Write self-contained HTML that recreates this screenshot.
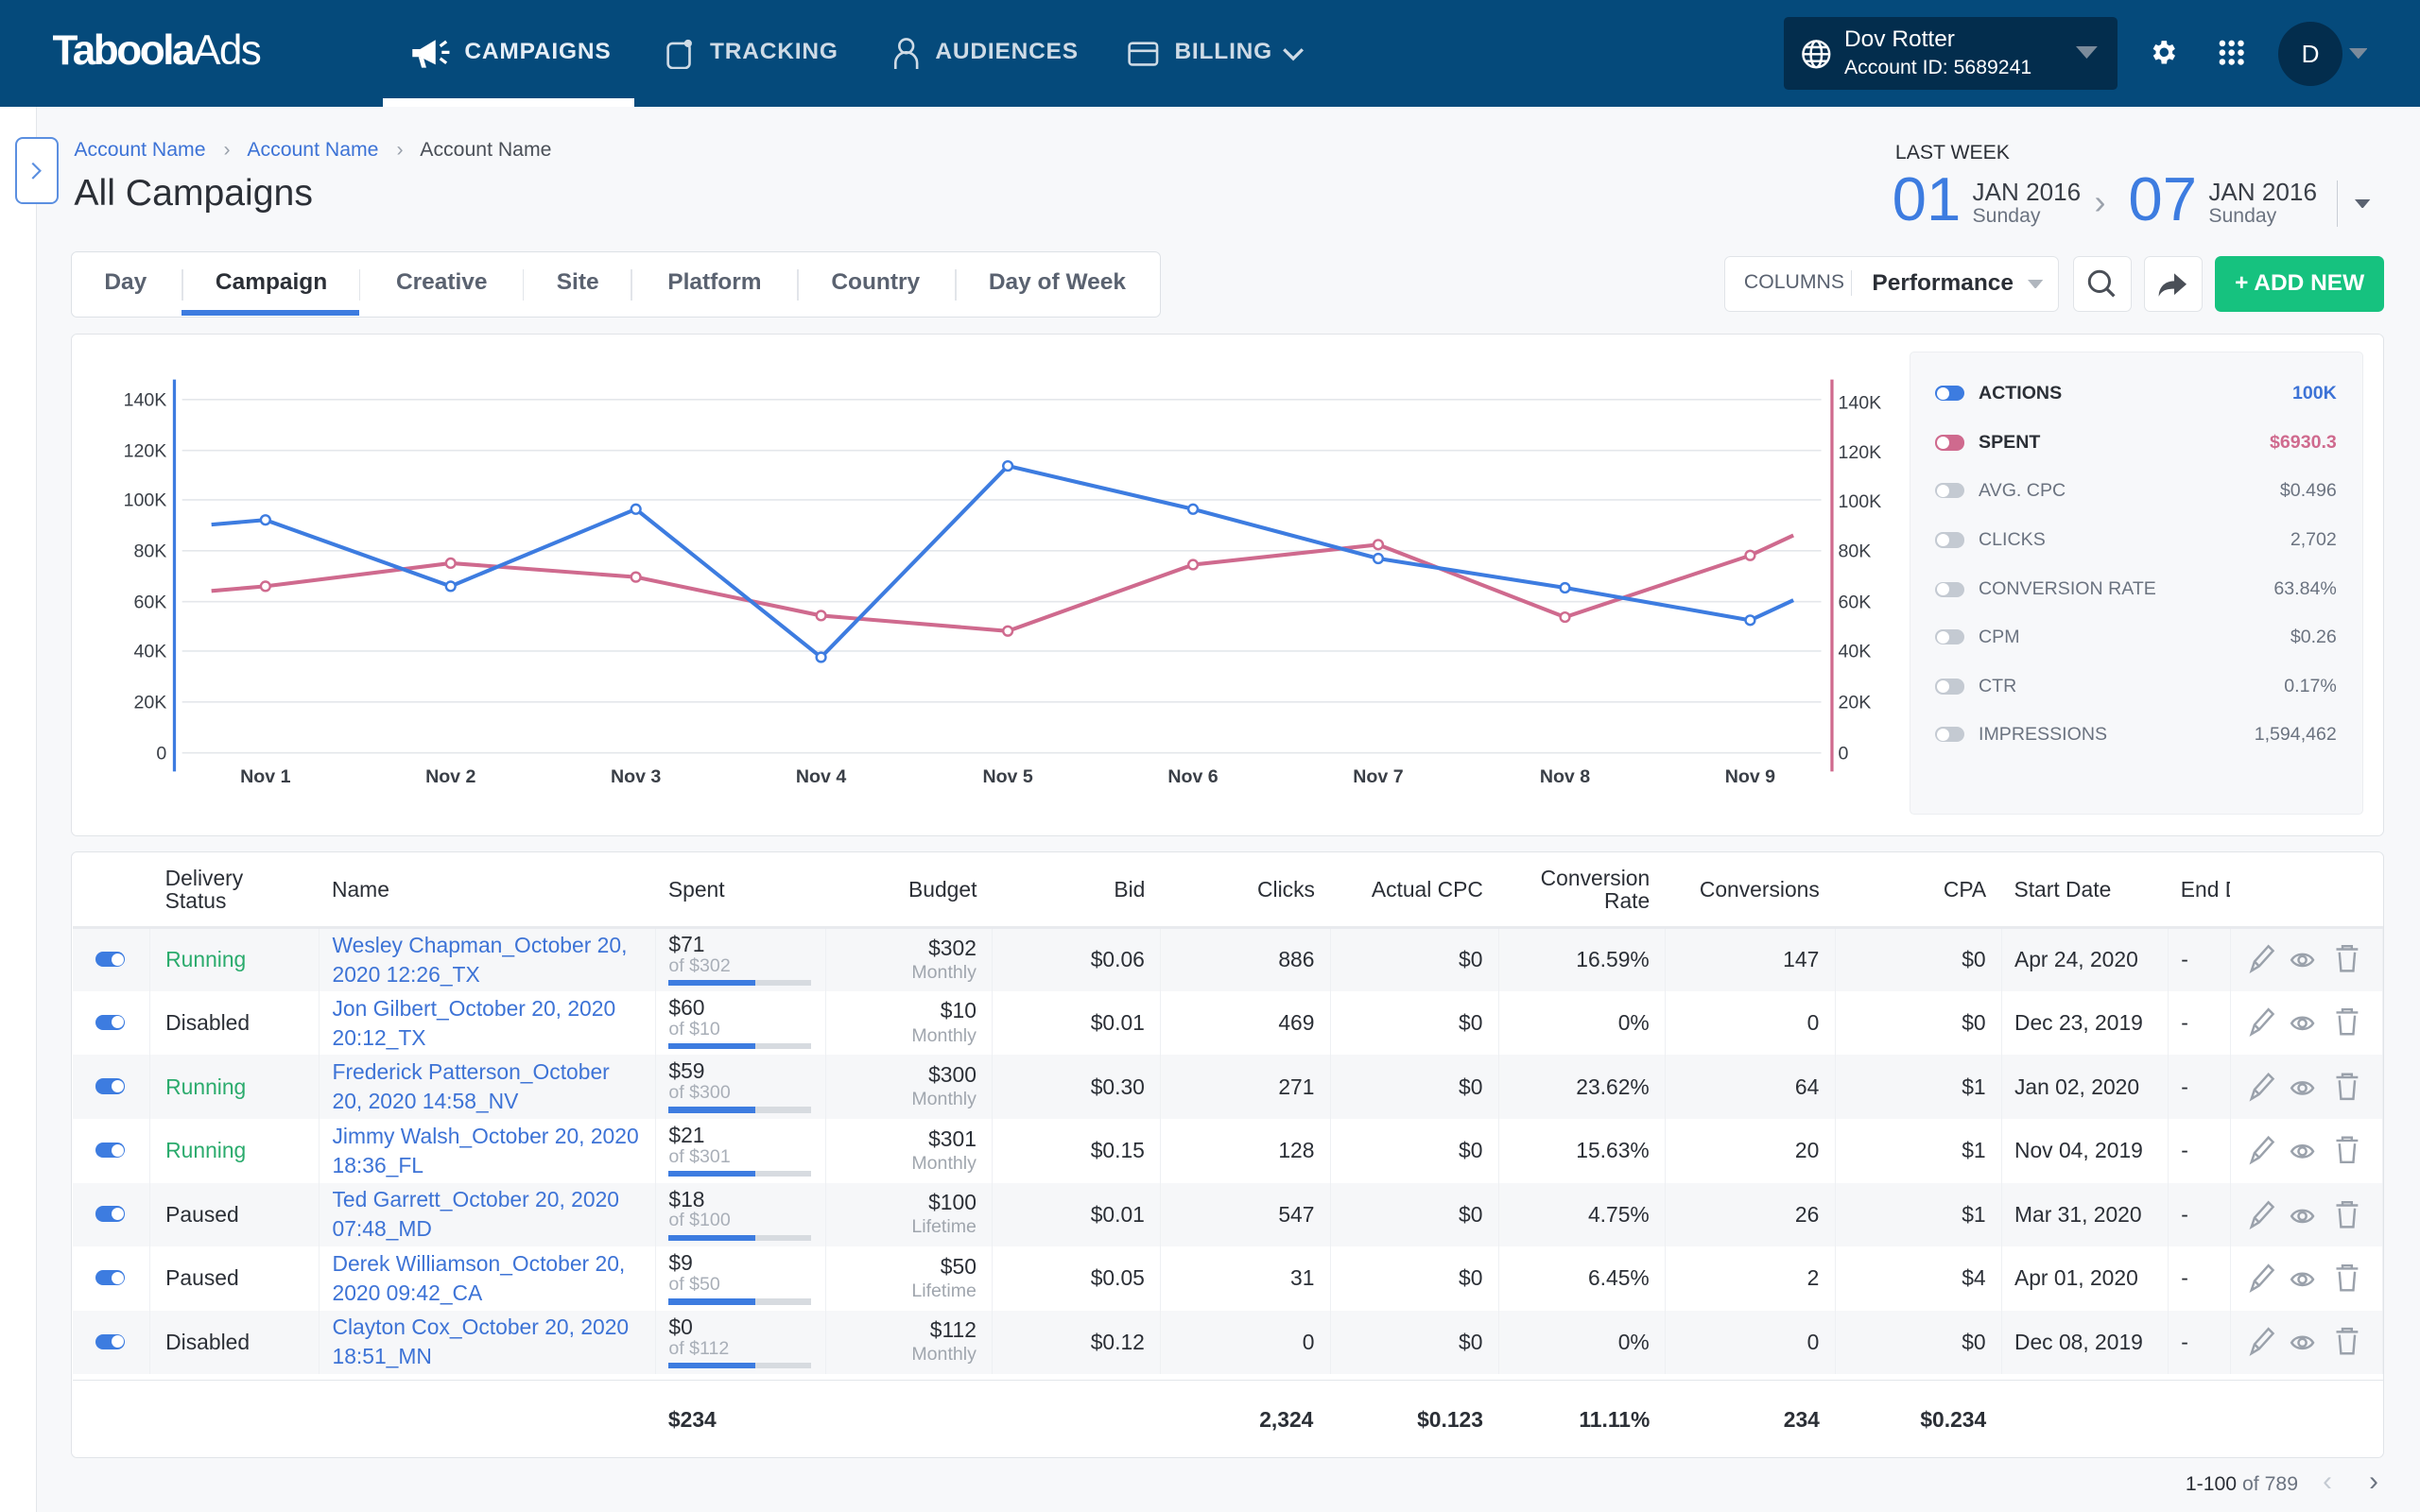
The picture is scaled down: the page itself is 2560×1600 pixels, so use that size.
<!DOCTYPE html>
<html><head><meta charset="utf-8">
<style>
*{box-sizing:border-box;margin:0;padding:0}
html,body{width:2560px;height:1600px;overflow:hidden;background:#f7f8fa}
#root{zoom:1.63265;width:1568px;height:980px;position:relative;font-family:"Liberation Sans",sans-serif;color:#2b2f36;background:#f7f8fa}
.abs{position:absolute}
.nav{left:0;top:0;width:1568px;height:69px;background:#054a7b}
.navi{color:#e6eef6;font-weight:bold;font-size:15px;letter-spacing:.5px;top:25px}
.tabs{left:46px;top:163px;width:706px;height:43px;background:#fff;border:1px solid #dde1e6;border-radius:4px}
.tab{position:absolute;top:11px;font-size:15px;font-weight:bold;color:#5a6270}
.sep{position:absolute;top:11px;width:1px;height:20px;background:#e2e5ea}
.card{background:#fff;border:1px solid #e1e4e8;border-radius:4px}
.lg{position:absolute;left:1254px;font-size:12px;color:#6b7380;width:260px;height:16px}
.lg .t{position:absolute;left:0;top:0;width:19px;height:10px;border-radius:5px;background:#c4cad2}
.lg .t:after{content:"";position:absolute;left:1px;top:1px;width:8px;height:8px;border-radius:50%;background:#fff}
.lg .n{position:absolute;left:28px;top:-2px}
.lg .v{position:absolute;right:0;top:-2px}
table{border-collapse:collapse;table-layout:fixed;position:absolute;left:47px;top:553px;width:1497px;font-size:14px}
th{font-weight:normal;color:#2b2f36;height:48px;border-bottom:2px solid #e8eaee;text-align:left;vertical-align:middle;line-height:15px}
td{height:41.4px;vertical-align:middle;border-right:1px solid #eef0f3;padding:0 10px;white-space:nowrap}
tr.o td{background:#f6f7f9}
td.r,th.r{text-align:right;padding-right:10px}
.tg{display:inline-block;width:19px;height:10px;border-radius:5px;background:#3d7ce0;position:relative;margin-left:5px}
.tg:after{content:"";position:absolute;right:1px;top:1px;width:8px;height:8px;border-radius:50%;background:#fff}
.nm{color:#3d73d6;line-height:19px;white-space:normal;padding-left:8px}
.run{color:#2bab6d}
.sp{line-height:14px;padding-left:8px}
.sp small{display:block;color:#a9afb8;font-size:12px}
.bar{width:92px;height:4px;background:#d7dbe0;margin-top:2px;position:relative}
.bar i{position:absolute;left:0;top:0;height:4px;width:56px;background:#3d7ce0}
.bd{line-height:16px}
.bd small{display:block;color:#a0a6ae;font-size:12px}
.ic{color:#9aa1ab}
</style></head><body><div id="root">
<!-- NAV -->
<div class="abs nav"></div>
<div class="abs" style="left:34px;top:18px;font-size:27px;color:#fff;font-weight:bold;letter-spacing:-1.5px">Taboola<span style="font-weight:normal;letter-spacing:-1px">Ads</span></div>
<div class="abs" style="left:248px;top:64px;width:163px;height:5px;background:#fff"></div>
<svg class="abs" style="left:265px;top:24px" width="28" height="22" viewBox="0 0 28 22"><path d="M2 8h5l10-6v16L7 13H2z" fill="#fff"/><path d="M6 13l2 7h3l-2-7" fill="#fff"/><path d="M20 6l4-3M21 10h5M20 14l4 3" stroke="#fff" stroke-width="2"/></svg>
<div class="abs navi" style="left:301px">CAMPAIGNS</div>
<svg class="abs" style="left:432px;top:25px" width="18" height="20"><rect x="1" y="3" width="14" height="16" rx="3" fill="none" stroke="#cfdbe6" stroke-width="1.6"/><circle cx="14" cy="3" r="2.5" fill="#cfdbe6"/></svg>
<div class="abs navi" style="left:460px;color:#cfdbe6">TRACKING</div>
<svg class="abs" style="left:578px;top:24px" width="18" height="21"><circle cx="9" cy="6" r="4.5" fill="none" stroke="#cfdbe6" stroke-width="1.6"/><path d="M2 21v-4a7 7 0 0 1 14 0v4" fill="none" stroke="#cfdbe6" stroke-width="1.6"/></svg>
<div class="abs navi" style="left:606px;color:#cfdbe6">AUDIENCES</div>
<svg class="abs" style="left:731px;top:27px" width="20" height="16"><rect x="1" y="1" width="18" height="14" rx="2" fill="none" stroke="#cfdbe6" stroke-width="1.6"/><path d="M1 6h18" stroke="#cfdbe6" stroke-width="1.6"/></svg>
<div class="abs navi" style="left:761px;color:#cfdbe6">BILLING</div>
<svg class="abs" style="left:830px;top:30px" width="16" height="10"><path d="M2 2l6 6 6-6" fill="none" stroke="#cfdbe6" stroke-width="2"/></svg>
<div class="abs" style="left:1156px;top:11px;width:216px;height:47px;background:#032d4d;border-radius:3px"></div>
<svg class="abs" style="left:1167px;top:25px" width="20" height="20" viewBox="0 0 20 20" fill="none" stroke="#fff" stroke-width="1.5"><circle cx="10" cy="10" r="8.5"/><ellipse cx="10" cy="10" rx="3.5" ry="8.5"/><path d="M1.5 10h17M3 5.5h14M3 14.5h14"/></svg>
<div class="abs" style="left:1195px;top:17px;color:#fff;font-size:15px">Dov Rotter</div>
<div class="abs" style="left:1195px;top:37px;color:#fff;font-size:13px">Account ID: 5689241</div>
<svg class="abs" style="left:1345px;top:30px" width="14" height="8"><path d="M0 0h14L7 8z" fill="#7b8b9b"/></svg>
<svg class="abs" style="left:1392px;top:24px" width="20" height="20" viewBox="0 0 24 24"><path fill="#fff" d="M19.4 13a7.5 7.5 0 0 0 0-2l2.1-1.6-2-3.5-2.5 1a7 7 0 0 0-1.7-1L15 3h-4l-.4 2.9a7 7 0 0 0-1.7 1l-2.5-1-2 3.5L6.6 11a7.5 7.5 0 0 0 0 2l-2.1 1.6 2 3.5 2.5-1a7 7 0 0 0 1.7 1L11 21h4l.4-2.9a7 7 0 0 0 1.7-1l2.5 1 2-3.5zM13 15.5a3.5 3.5 0 1 1 0-7 3.5 3.5 0 0 1 0 7z" transform="translate(-1 0)"/></svg>
<svg class="abs" style="left:1437px;top:25px" width="18" height="18"><g fill="#fff"><circle cx="3" cy="3" r="2"/><circle cx="9" cy="3" r="2"/><circle cx="15" cy="3" r="2"/><circle cx="3" cy="9" r="2"/><circle cx="9" cy="9" r="2"/><circle cx="15" cy="9" r="2"/><circle cx="3" cy="15" r="2"/><circle cx="9" cy="15" r="2"/><circle cx="15" cy="15" r="2"/></g></svg>
<div class="abs" style="left:1476px;top:14px;width:42px;height:42px;border-radius:50%;background:#032d4d;color:#fff;font-size:16px;text-align:center;line-height:42px">D</div>
<svg class="abs" style="left:1522px;top:31px" width="12" height="7"><path d="M0 0h12L6 7z" fill="#7b8b9b"/></svg>

<!-- left sidebar -->
<div class="abs" style="left:0;top:69px;width:24px;height:911px;background:#fff;border-right:1px solid #e3e6ea"></div>
<div class="abs" style="left:10px;top:89px;width:28px;height:43px;background:#fff;border:1.5px solid #5b8fe0;border-radius:5px"></div>
<svg class="abs" style="left:19px;top:105px" width="8" height="12"><path d="M2 1l5 5-5 5" fill="none" stroke="#5b8fe0" stroke-width="1.3"/></svg>

<!-- header -->
<div class="abs" style="left:48px;top:90px;font-size:13px;color:#3d73d6">Account Name <span style="color:#9aa1ab;margin:0 8px">›</span> Account Name <span style="color:#9aa1ab;margin:0 8px">›</span> <span style="color:#4a4f57">Account Name</span></div>
<div class="abs" style="left:48px;top:112px;font-size:24px;color:#2b2f36">All Campaigns</div>

<div class="abs" style="left:1228px;top:92px;font-size:13px;color:#2b2f36">LAST WEEK</div>
<div class="abs" style="left:1226px;top:106px;font-size:40px;color:#3d7ce0;font-weight:300">01</div>
<div class="abs" style="left:1278px;top:115px;font-size:16px;color:#3a3f47">JAN 2016</div>
<div class="abs" style="left:1278px;top:133px;font-size:13px;color:#6b7380">Sunday</div>
<div class="abs" style="left:1357px;top:118px;font-size:22px;color:#9aa1ab">›</div>
<div class="abs" style="left:1379px;top:106px;font-size:40px;color:#3d7ce0">07</div>
<div class="abs" style="left:1431px;top:115px;font-size:16px;color:#3a3f47">JAN 2016</div>
<div class="abs" style="left:1431px;top:133px;font-size:13px;color:#6b7380">Sunday</div>
<div class="abs" style="left:1514px;top:117px;width:1px;height:30px;background:#c9ced5"></div>
<svg class="abs" style="left:1526px;top:129px" width="10" height="6"><path d="M0 0h10L5 6z" fill="#5a6270"/></svg>

<!-- tabs -->
<div class="abs tabs">
<div class="tab" style="left:21px">Day</div><div class="sep" style="left:71px"></div>
<div class="tab" style="left:93px;color:#2b2f36">Campaign</div><div class="sep" style="left:186px"></div>
<div class="abs" style="left:71px;top:37px;width:115px;height:4px;background:#3d7ce0"></div>
<div class="tab" style="left:210px">Creative</div><div class="sep" style="left:292px"></div>
<div class="tab" style="left:314px">Site</div><div class="sep" style="left:362px"></div>
<div class="tab" style="left:386px">Platform</div><div class="sep" style="left:470px"></div>
<div class="tab" style="left:492px">Country</div><div class="sep" style="left:572px"></div>
<div class="tab" style="left:594px">Day of Week</div>
</div>

<!-- right controls -->
<div class="abs card" style="left:1117px;top:166px;width:217px;height:36px"></div>
<div class="abs" style="left:1130px;top:176px;font-size:13px;color:#5a6270">COLUMNS</div>
<div class="abs" style="left:1199px;top:175px;width:1px;height:17px;background:#dde1e6"></div>
<div class="abs" style="left:1213px;top:175px;font-size:15px;font-weight:bold;color:#2b2f36">Performance</div>
<svg class="abs" style="left:1314px;top:181px" width="10" height="6"><path d="M0 0h10L5 6z" fill="#b0b6be"/></svg>
<div class="abs card" style="left:1343px;top:166px;width:38px;height:36px"></div>
<svg class="abs" style="left:1352px;top:174px" width="20" height="20"><circle cx="8.5" cy="8.5" r="6.5" fill="none" stroke="#4a4f57" stroke-width="1.8"/><path d="M13 13l5 5" stroke="#4a4f57" stroke-width="2"/></svg>
<div class="abs card" style="left:1389px;top:166px;width:38px;height:36px"></div>
<svg class="abs" style="left:1398px;top:175px" width="20" height="18"><path d="M11 2l8 7-8 7v-4C6 12 3 13 1 17c0-6 4-10 10-10z" fill="#4a4f57"/></svg>
<div class="abs" style="left:1435px;top:166px;width:110px;height:36px;background:#16c27f;border-radius:4px;color:#fff;font-size:15px;font-weight:bold;text-align:center;line-height:36px">+ ADD NEW</div>

<!-- chart card -->
<div class="abs card" style="left:46px;top:216px;width:1499px;height:326px"></div>
<div class="abs" style="left:1237px;top:228px;width:294px;height:300px;background:#f7f8fa;border:1px solid #eceef1;border-radius:3px"></div>
<svg class="abs" style="left:0;top:0" width="1568" height="560">
<g stroke="#e4e7eb" stroke-width="1">
<path d="M118 259H1180M118 292H1180M118 324H1180M118 357H1180M118 390H1180M118 422H1180M118 455H1180M118 488H1180"/></g>
<path d="M113 246V500" stroke="#3d7ce0" stroke-width="2"/>
<path d="M1187 246V500" stroke="#cf6a8e" stroke-width="2"/>
<g font-size="12" fill="#3a3f47" text-anchor="end" font-family="Liberation Sans">
<text x="108" y="263">140K</text><text x="108" y="296">120K</text><text x="108" y="328">100K</text><text x="108" y="361">80K</text><text x="108" y="394">60K</text><text x="108" y="426">40K</text><text x="108" y="459">20K</text><text x="108" y="492">0</text></g>
<g font-size="12" fill="#3a3f47" font-family="Liberation Sans">
<text x="1191" y="265">140K</text><text x="1191" y="297">120K</text><text x="1191" y="329">100K</text><text x="1191" y="361">80K</text><text x="1191" y="394">60K</text><text x="1191" y="426">40K</text><text x="1191" y="459">20K</text><text x="1191" y="492">0</text></g>
<g font-size="12" fill="#3a3f47" font-weight="bold" text-anchor="middle" font-family="Liberation Sans">
<text x="172" y="507">Nov 1</text><text x="292" y="507">Nov 2</text><text x="412" y="507">Nov 3</text><text x="532" y="507">Nov 4</text><text x="653" y="507">Nov 5</text><text x="773" y="507">Nov 6</text><text x="893" y="507">Nov 7</text><text x="1014" y="507">Nov 8</text><text x="1134" y="507">Nov 9</text></g>
<polyline fill="none" stroke="#cf6a8e" stroke-width="2.5" points="137,383 172,380 292,365 412,374 532,399 653,409 773,366 893,353 1014,400 1134,360 1162,347"/>
<polyline fill="none" stroke="#3d7ce0" stroke-width="2.5" points="137,340 172,337 292,380 412,330 532,426 653,302 773,330 893,362 1014,381 1134,402 1162,389"/>
<g fill="#fff" stroke="#cf6a8e" stroke-width="1.5"><circle cx="172" cy="380" r="3"/><circle cx="292" cy="365" r="3"/><circle cx="412" cy="374" r="3"/><circle cx="532" cy="399" r="3"/><circle cx="653" cy="409" r="3"/><circle cx="773" cy="366" r="3"/><circle cx="893" cy="353" r="3"/><circle cx="1014" cy="400" r="3"/><circle cx="1134" cy="360" r="3"/></g>
<g fill="#fff" stroke="#3d7ce0" stroke-width="1.5"><circle cx="172" cy="337" r="3"/><circle cx="292" cy="380" r="3"/><circle cx="412" cy="330" r="3"/><circle cx="532" cy="426" r="3"/><circle cx="653" cy="302" r="3"/><circle cx="773" cy="330" r="3"/><circle cx="893" cy="362" r="3"/><circle cx="1014" cy="381" r="3"/><circle cx="1134" cy="402" r="3"/></g>
</svg>
<div class="lg" style="top:250px"><span class="t" style="background:#3d7ce0"></span><span class="n" style="font-weight:bold;color:#2b2f36">ACTIONS</span><span class="v" style="color:#3d73d6;font-weight:bold">100K</span></div>
<div class="lg" style="top:282px"><span class="t" style="background:#cf6a8e"></span><span class="n" style="font-weight:bold;color:#2b2f36">SPENT</span><span class="v" style="color:#cf6a8e;font-weight:bold">$6930.3</span></div>
<div class="lg" style="top:313px"><span class="t"></span><span class="n">AVG. CPC</span><span class="v">$0.496</span></div>
<div class="lg" style="top:345px"><span class="t"></span><span class="n">CLICKS</span><span class="v">2,702</span></div>
<div class="lg" style="top:377px"><span class="t"></span><span class="n">CONVERSION RATE</span><span class="v">63.84%</span></div>
<div class="lg" style="top:408px"><span class="t"></span><span class="n">CPM</span><span class="v">$0.26</span></div>
<div class="lg" style="top:440px"><span class="t"></span><span class="n">CTR</span><span class="v">0.17%</span></div>
<div class="lg" style="top:471px"><span class="t"></span><span class="n">IMPRESSIONS</span><span class="v">1,594,462</span></div>

<!-- table card -->
<div class="abs card" style="left:46px;top:552px;width:1499px;height:393px"></div>
<table>
<colgroup><col style="width:50px"><col style="width:110px"><col style="width:218px"><col style="width:110px"><col style="width:108px"><col style="width:109px"><col style="width:110px"><col style="width:109px"><col style="width:108px"><col style="width:110px"><col style="width:108px"><col style="width:108px"><col style="width:40px"><col style="width:99px"></colgroup>
<tr><th></th><th style="padding-left:10px">Delivery<br>Status</th><th style="padding-left:8px">Name</th><th style="padding-left:8px">Spent</th><th class="r">Budget</th><th class="r">Bid</th><th class="r">Clicks</th><th class="r">Actual CPC</th><th class="r">Conversion<br>Rate</th><th class="r">Conversions</th><th class="r">CPA</th><th style="padding-left:8px">Start Date</th><th style="padding-left:8px;overflow:hidden;white-space:nowrap">End Date</th><th></th></tr>
<tr class="o"><td><span class="tg"></span></td><td class="run">Running</td><td class="nm">Wesley Chapman_October 20, 2020 12:26_TX</td><td class="sp">$71<small>of $302</small><div class="bar"><i></i></div></td><td class="r bd">$302<small>Monthly</small></td><td class="r">$0.06</td><td class="r">886</td><td class="r">$0</td><td class="r">16.59%</td><td class="r">147</td><td class="r">$0</td><td style="padding-left:8px">Apr 24, 2020</td><td style="padding-left:8px">-</td><td class="ic"></td></tr>
<tr><td><span class="tg"></span></td><td>Disabled</td><td class="nm">Jon Gilbert_October 20, 2020 20:12_TX</td><td class="sp">$60<small>of $10</small><div class="bar"><i></i></div></td><td class="r bd">$10<small>Monthly</small></td><td class="r">$0.01</td><td class="r">469</td><td class="r">$0</td><td class="r">0%</td><td class="r">0</td><td class="r">$0</td><td style="padding-left:8px">Dec 23, 2019</td><td style="padding-left:8px">-</td><td></td></tr>
<tr class="o"><td><span class="tg"></span></td><td class="run">Running</td><td class="nm">Frederick Patterson_October 20, 2020 14:58_NV</td><td class="sp">$59<small>of $300</small><div class="bar"><i></i></div></td><td class="r bd">$300<small>Monthly</small></td><td class="r">$0.30</td><td class="r">271</td><td class="r">$0</td><td class="r">23.62%</td><td class="r">64</td><td class="r">$1</td><td style="padding-left:8px">Jan 02, 2020</td><td style="padding-left:8px">-</td><td></td></tr>
<tr><td><span class="tg"></span></td><td class="run">Running</td><td class="nm">Jimmy Walsh_October 20, 2020 18:36_FL</td><td class="sp">$21<small>of $301</small><div class="bar"><i></i></div></td><td class="r bd">$301<small>Monthly</small></td><td class="r">$0.15</td><td class="r">128</td><td class="r">$0</td><td class="r">15.63%</td><td class="r">20</td><td class="r">$1</td><td style="padding-left:8px">Nov 04, 2019</td><td style="padding-left:8px">-</td><td></td></tr>
<tr class="o"><td><span class="tg"></span></td><td>Paused</td><td class="nm">Ted Garrett_October 20, 2020 07:48_MD</td><td class="sp">$18<small>of $100</small><div class="bar"><i></i></div></td><td class="r bd">$100<small>Lifetime</small></td><td class="r">$0.01</td><td class="r">547</td><td class="r">$0</td><td class="r">4.75%</td><td class="r">26</td><td class="r">$1</td><td style="padding-left:8px">Mar 31, 2020</td><td style="padding-left:8px">-</td><td></td></tr>
<tr><td><span class="tg"></span></td><td>Paused</td><td class="nm">Derek Williamson_October 20, 2020 09:42_CA</td><td class="sp">$9<small>of $50</small><div class="bar"><i></i></div></td><td class="r bd">$50<small>Lifetime</small></td><td class="r">$0.05</td><td class="r">31</td><td class="r">$0</td><td class="r">6.45%</td><td class="r">2</td><td class="r">$4</td><td style="padding-left:8px">Apr 01, 2020</td><td style="padding-left:8px">-</td><td></td></tr>
<tr class="o"><td><span class="tg"></span></td><td>Disabled</td><td class="nm">Clayton Cox_October 20, 2020 18:51_MN</td><td class="sp">$0<small>of $112</small><div class="bar"><i></i></div></td><td class="r bd">$112<small>Monthly</small></td><td class="r">$0.12</td><td class="r">0</td><td class="r">$0</td><td class="r">0%</td><td class="r">0</td><td class="r">$0</td><td style="padding-left:8px">Dec 08, 2019</td><td style="padding-left:8px">-</td><td></td></tr>
</table>
<!-- action icons -->
<svg class="abs" style="left:1450px;top:600px" width="90" height="292">
<defs><g id="acts" fill="none" stroke="#9aa1ab" stroke-width="1.5">
<path d="M9 20l2-6 9-10 3 3-9 10z M11 14l3 3"/>
<path d="M35 13c3-5 11-5 14 0-3 5-11 5-14 0z"/><circle cx="42" cy="13" r="2.5"/>
<path d="M64 6h14M68 6V4h6v2M66 8l1 12h8l1-12"/></g></defs>
<use href="#acts" y="9"/><use href="#acts" y="50"/><use href="#acts" y="92"/><use href="#acts" y="133"/><use href="#acts" y="175"/><use href="#acts" y="216"/><use href="#acts" y="257"/>
</svg>
<div class="abs" style="left:47px;top:894px;width:1497px;height:1px;background:#e3e6ea"></div>
<div class="abs" style="top:912px;font-size:14px;font-weight:bold;color:#2b2f36;left:0;width:1568px">
<span class="abs" style="left:433px">$234</span>
<span class="abs" style="right:717px">2,324</span>
<span class="abs" style="right:607px">$0.123</span>
<span class="abs" style="right:499px">11.11%</span>
<span class="abs" style="right:389px">234</span>
<span class="abs" style="right:281px">$0.234</span>
</div>
<div class="abs" style="left:1416px;top:955px;font-size:13px;color:#2b2f36">1-100 <span style="color:#6b7380">of 789</span></div>
<div class="abs" style="left:1505px;top:950px;font-size:18px;color:#c4cad2">‹</div>
<div class="abs" style="left:1535px;top:950px;font-size:18px;color:#6b7380">›</div>
</div></body></html>
